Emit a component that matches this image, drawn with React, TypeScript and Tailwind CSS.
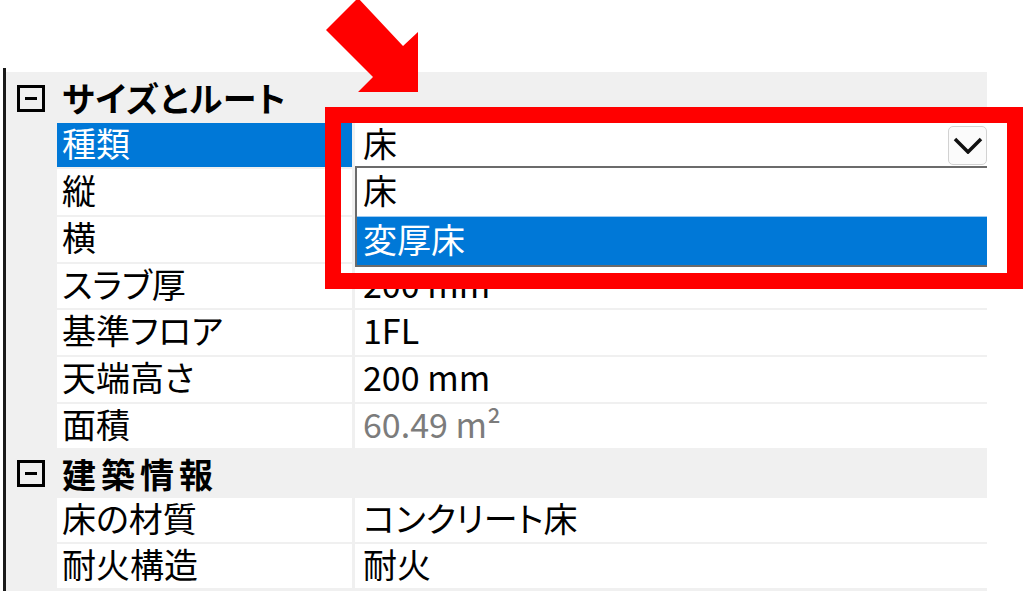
type Row = {
  label: string;
  value?: string;
  h: string;
  muted?: boolean;
  selected?: boolean;
};

const sizeRows: Row[] = [
  { label: "種類", value: "床", h: "h-[46px]", selected: true },
  { label: "縦", h: "h-[48px]" },
  { label: "横", h: "h-[47px]" },
  { label: "スラブ厚", value: "200 mm", h: "h-[46px]" },
  { label: "基準フロア", value: "1FL", h: "h-[47px]" },
  { label: "天端高さ", value: "200 mm", h: "h-[47px]" },
  { label: "面積", value: "60.49 m²", h: "h-[46px]", muted: true },
];

const buildRows: Row[] = [
  { label: "床の材質", value: "コンクリート床", h: "h-[46px]" },
  { label: "耐火構造", value: "耐火", h: "h-[46px]" },
];

function MinusBox() {
  return (
    <div className="ml-[11px] flex h-[27px] w-[28px] items-center justify-center border-[3px] border-black">
      <div className="h-[3px] w-[12px] bg-black" />
    </div>
  );
}

function Category({ title, h, track }: { title: string; h: string; track: string }) {
  return (
    <div className={`flex ${h} items-center bg-[#f0f0f0] pt-[3px]`}>
      <div className="w-[51px] shrink-0">
        <MinusBox />
      </div>
      <div className={`pl-[5px] text-[34px] font-bold leading-none ${track}`}>{title}</div>
    </div>
  );
}

function PropRow({ row }: { row: Row }) {
  return (
    <div className={`flex ${row.h} bg-[#f0f0f0] pt-[2px]`}>
      <div className="w-[51px] shrink-0" />
      <div
        className={`flex w-[295px] shrink-0 items-center pb-[5px] pl-[5px] ${
          row.selected ? "bg-[#0078d7] text-white" : "bg-white"
        }`}
      >
        {row.label}
      </div>
      <div className="ml-[3px] flex flex-1 items-center justify-between bg-white pl-[8px]">
        <span className={`pb-[5px] ${row.muted ? "text-[#7c7c7c]" : ""}`}>{row.value}</span>
        {row.selected && (
          <div className="flex h-[39px] w-[39px] items-center justify-center rounded-[5px] border border-[#d2d2d2] bg-[#fbfbfb]">
            <svg width="30" height="18" viewBox="0 0 30 18" fill="none">
              <path d="M2 3 L15 16 L28 3" stroke="#111" strokeWidth="3.5" />
            </svg>
          </div>
        )}
      </div>
    </div>
  );
}

export default function App() {
  return (
    <div className="relative h-[591px] w-[1024px] overflow-hidden bg-white font-['Noto_Sans_CJK_JP','Noto_Sans',sans-serif] text-[34px] leading-none text-black [font-feature-settings:'palt']">
      <div className="flex h-full pl-[3px] pt-[72px]">
        {/* left edge of the panel */}
        <div className="-mt-[4px] w-[3px] shrink-0 bg-[#1a1a1a]" />
        <div className="flex w-[981px] flex-col">
          <Category title="サイズとルート" h="h-[49px]" track="tracking-[1px]" />
          {sizeRows.map((r) => (
            <PropRow key={r.label} row={r} />
          ))}
          <Category title="建築情報" h="h-[48px]" track="tracking-[5px]" />
          {buildRows.map((r) => (
            <PropRow key={r.label} row={r} />
          ))}
          <div className="flex-1 bg-[#f0f0f0]" />
        </div>
      </div>

      {/* open combo list */}
      <div className="absolute left-[355px] top-[166px] flex h-[101px] w-[632px] flex-col border-[2px] border-r-0 border-[#6b6b6b] bg-white">
        <div className="flex h-[48px] items-center pb-[4px] pl-[6px]">床</div>
        <div className="flex flex-1 items-center border-t border-[#9fcbf2] bg-[#0078d7] pb-[5px] pl-[6px] text-white">
          変厚床
        </div>
      </div>

      {/* red highlight frame */}
      <div className="absolute left-[325px] top-[107px] h-[182px] w-[698px] border-[16px] border-[#ff0000]" />

      {/* red arrow */}
      <svg
        className="absolute left-[320px] top-0"
        width="110"
        height="100"
        viewBox="320 0 110 100"
      >
        <polygon
          points="358,-2 403,46 418,32 418,92 358,92 373,77 326,30"
          fill="#ff0000"
        />
      </svg>
    </div>
  );
}
